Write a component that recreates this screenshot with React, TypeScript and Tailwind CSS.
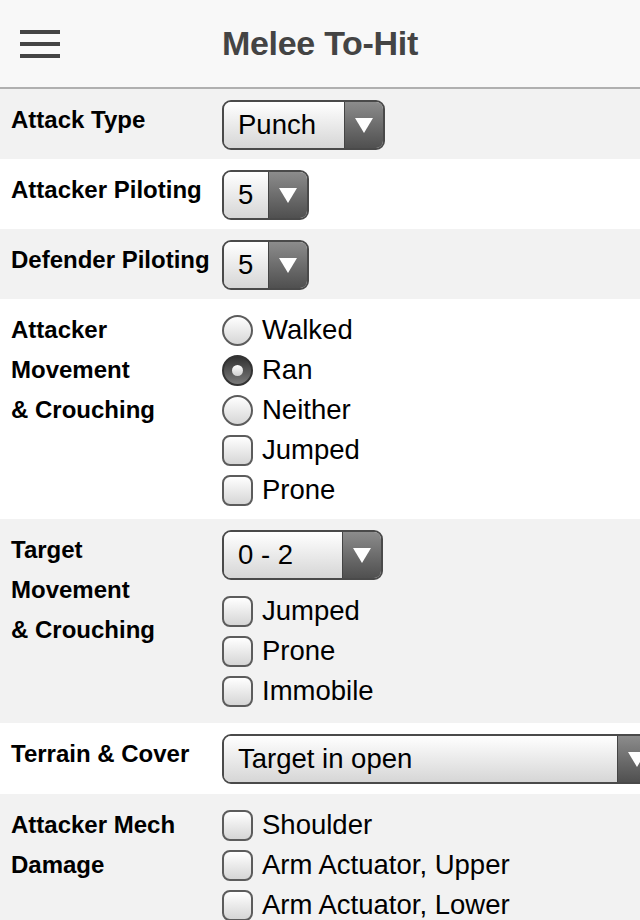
import React from 'react';

const font = { fontFamily: '"Liberation Sans", Arial, Helvetica, sans-serif' };

const Caret = () => (
  <svg width="18" height="15" viewBox="0 0 18 15">
    <path d="M0 0 H18 L9 15 Z" fill="#fff" />
  </svg>
);

const Select = ({ value, className }: { value: string; className: string }) => (
  <div className={`flex h-[50px] overflow-hidden rounded-[9px] border-2 border-[#4a4a4a] ${className}`}>
    <div className="flex flex-1 items-center bg-gradient-to-b from-white to-[#d6d6d6] pl-[14px] text-[27.5px] text-black">
      {value}
    </div>
    <div className="flex w-[39px] shrink-0 items-center justify-center border-l border-[#444] bg-gradient-to-b from-[#8c8c8c] to-[#505050]">
      <Caret />
    </div>
  </div>
);

const Radio = ({ label, checked }: { label: string; checked?: boolean }) => (
  <div className="flex h-[40px] items-center">
    {checked ? (
      <div className="flex h-[31px] w-[31px] items-center justify-center rounded-full border-2 border-[#333] bg-gradient-to-b from-[#333] to-[#7a7a7a]">
        <div className="h-[11px] w-[11px] rounded-full bg-gradient-to-b from-white to-[#cfcfcf]" />
      </div>
    ) : (
      <div className="h-[31px] w-[31px] rounded-full border-2 border-[#5c5c5c] bg-gradient-to-b from-white to-[#d6d6d6]" />
    )}
    <span className="ml-[9px] text-[27.5px] text-black">{label}</span>
  </div>
);

const Check = ({ label }: { label: string }) => (
  <div className="flex h-[40px] items-center">
    <div className="h-[31px] w-[31px] rounded-[8px] border-2 border-[#5c5c5c] bg-gradient-to-b from-white to-[#d6d6d6]" />
    <span className="ml-[9px] text-[27.5px] text-black">{label}</span>
  </div>
);

const Row = ({
  label,
  shade,
  children,
  className = 'pb-[9px]',
}: {
  label: React.ReactNode;
  shade?: boolean;
  children: React.ReactNode;
  className?: string;
}) => (
  <div className={`flex pt-[11px] ${shade ? 'bg-[#f2f2f2]' : 'bg-white'} ${className}`}>
    <div className="w-[222px] shrink-0 pl-[11px] text-[24px] font-bold leading-[40px] text-black">{label}</div>
    <div className="flex min-w-0 flex-1 flex-col">{children}</div>
  </div>
);

export default function App() {
  return (
    <div className="h-[920px] w-[640px] overflow-hidden bg-white" style={font}>
      {/* header */}
      <div className="relative flex h-[89px] items-center justify-center border-b-2 border-[#b0b0b0] bg-[#f8f8f8]">
        <div className="absolute left-[20px] top-[30px] flex w-[40px] flex-col gap-[8px]">
          <div className="h-[4px] bg-[#444]" />
          <div className="h-[4px] bg-[#444]" />
          <div className="h-[4px] bg-[#444]" />
        </div>
        <h1 className="text-[34px] font-bold tracking-[-0.3px] text-[#444]">Melee To-Hit</h1>
      </div>

      <Row label="Attack Type" shade>
        <Select value="Punch" className="w-[163px]" />
      </Row>

      <Row label="Attacker Piloting">
        <Select value="5" className="w-[87px]" />
      </Row>

      <Row label="Defender Piloting" shade>
        <Select value="5" className="w-[87px]" />
      </Row>

      <Row
        label={
          <>
            Attacker
            <br />
            Movement
            <br />&amp; Crouching
          </>
        }
      >
        <Radio label="Walked" />
        <Radio label="Ran" checked />
        <Radio label="Neither" />
        <Check label="Jumped" />
        <Check label="Prone" />
      </Row>

      <Row
        shade
        className="pb-[12px]"
        label={
          <>
            Target
            <br />
            Movement
            <br />&amp; Crouching
          </>
        }
      >
        <Select value="0 - 2" className="w-[161px]" />
        <div className="mt-[11px]">
          <Check label="Jumped" />
          <Check label="Prone" />
          <Check label="Immobile" />
        </div>
      </Row>

      <Row label="Terrain &amp; Cover" className="pb-[10px]">
        <Select value="Target in open" className="w-[436px]" />
      </Row>

      <Row
        shade
        label={
          <>
            Attacker Mech
            <br />
            Damage
          </>
        }
      >
        <Check label="Shoulder" />
        <Check label="Arm Actuator, Upper" />
        <Check label="Arm Actuator, Lower" />
      </Row>
    </div>
  );
}
